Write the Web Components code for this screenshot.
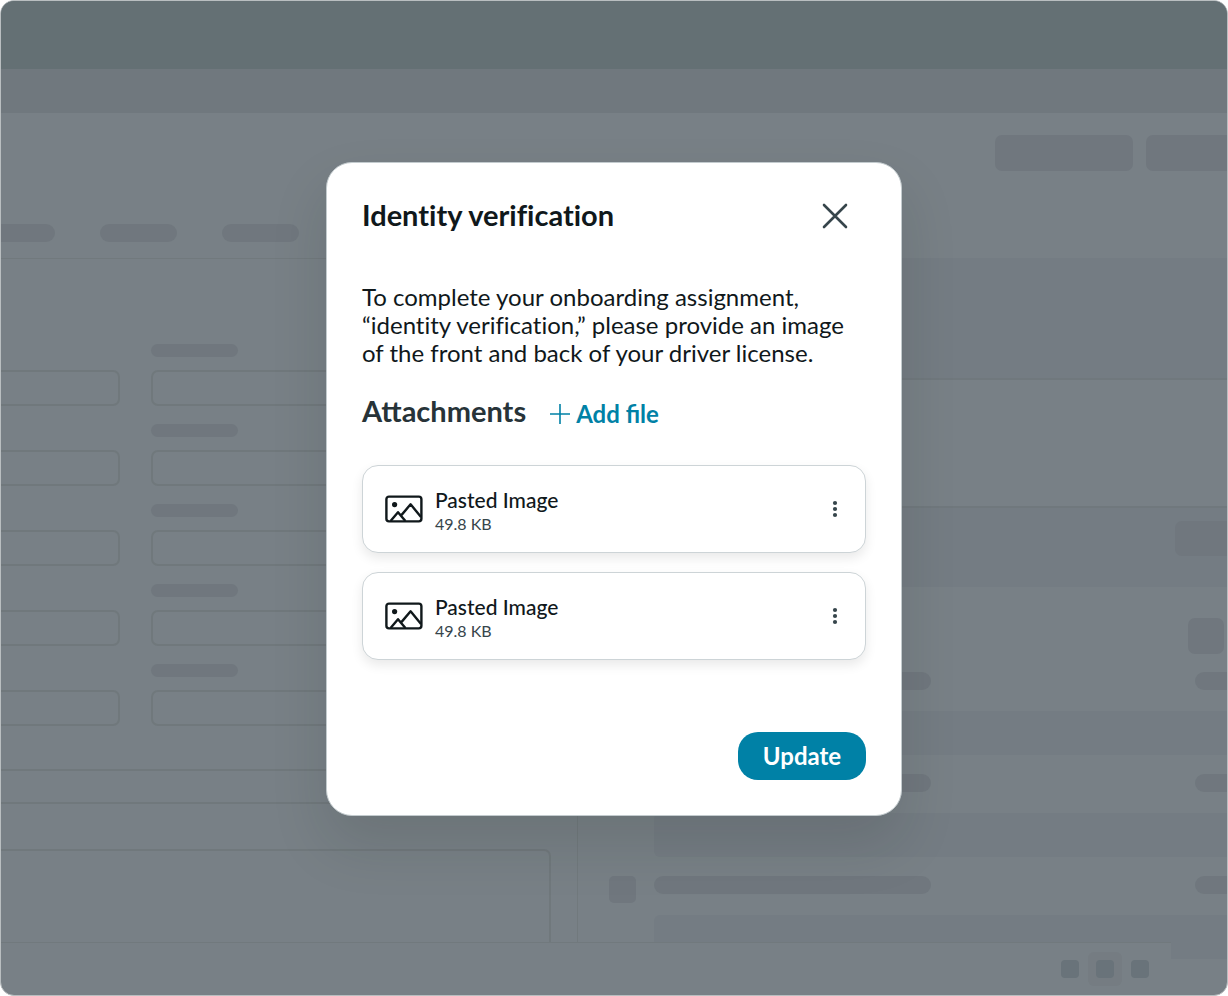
<!DOCTYPE html>
<html lang="en">
<head>
<meta charset="utf-8">
<meta name="viewport" content="width=device-width, initial-scale=1">
<title>Identity verification</title>
<style>
  body { margin: 0; background: #fff; font-family: Lato, "Open Sans", sans-serif; color: #10181b; }
</style>
</head>
<body>
<app-shell>
  <app-backdrop slot="backdrop"></app-backdrop>
  <modal-dialog heading="Identity verification">
    <p slot="intro">To complete your onboarding assignment, “identity verification,” please provide an image of the front and back of your driver license.</p>
    <attachment-card name="Pasted Image" size="49.8 KB"></attachment-card>
    <attachment-card name="Pasted Image" size="49.8 KB"></attachment-card>
  </modal-dialog>
</app-shell>

<script>
const define = (tag, html, setup) => customElements.define(tag, class extends HTMLElement {
  connectedCallback() {
    if (this.shadowRoot) return;
    this.attachShadow({ mode: "open" }).innerHTML = html;
    if (setup) setup(this, this.shadowRoot);
  }
});

define("app-shell", `
  <style>
    :host { display: grid; box-sizing: border-box; height: 100vh; min-height: 860px; border: 1px solid #b9bec0;
      border-radius: 14px; overflow: hidden; background: #788086; }
    .layer { grid-area: 1 / 1; min-width: 0; min-height: 0; }
    .back { display: grid; }
    .front { display: flex; justify-content: center; align-items: flex-start; padding: 161px 16px 0; }
  </style>
  <div class="layer back" aria-hidden="true"><slot name="backdrop"></slot></div>
  <div class="layer front"><slot></slot></div>`);

/* A placeholder bar: its size comes from --w and --h, its corners from --r. */
define("skeleton-block", `
  <style>
    :host { display: block; flex: none; box-sizing: border-box; width: var(--w, auto); height: var(--h, 18px);
      border-radius: var(--r, 9px); background: var(--c, #70777e); }
  </style>`);

define("app-backdrop", `
  <style>
    :host { display: grid; grid-template-rows: 68px 44px 146px minmax(0, 1fr) 53px; min-height: 0; overflow: hidden; }
    .top { background: #647074; }
    .nav { background: #70787e; }
    .head { display: flex; flex-direction: column; justify-content: space-between; box-sizing: border-box;
      padding: 22px 0 16px; border-bottom: 1px solid #71797d; }
    .actions { display: flex; gap: 13px; justify-content: flex-end; }
    .tabs { display: flex; gap: 45px; }
    .main { display: grid; grid-template-columns: 471fr 529fr; min-height: 0; }
    .left { border-right: 1px solid #71797d; overflow: hidden; }
    .fields { display: grid; grid-template-columns: 119px 1fr; column-gap: 31px; row-gap: 24px; padding-top: 85px; }
    .field { display: grid; grid-template-rows: 13px 36px; row-gap: 13px; height: 56px; }
    .box { grid-row: 2; box-sizing: border-box; border: 2px solid #70787c; border-radius: 7px; height: 36px; }
    .cut { border-left: 0; border-radius: 0 7px 7px 0; }
    .row { box-sizing: border-box; margin-top: 49px; height: 35px; border: 2px solid #70787c; border-width: 2px 0; }
    .note { box-sizing: border-box; margin: 45px 26px 0 0; height: 160px; border: 2px solid #70787c; border-left: 0; border-radius: 0 7px 0 0; }
    .right { overflow: hidden; }
    .band { box-sizing: border-box; background: #747c83; }
    .b1 { height: 122px; border-bottom: 2px solid #70787d; }
    .b2 { height: 126px; border-bottom: 2px solid #70787d; }
    .b3 { height: 79px; padding-top: 13px; display: flex; justify-content: flex-end; }
    .tool { display: flex; justify-content: flex-end; padding: 31px 3px 0 0; }
    .items { padding-top: 18px; }
    .right { margin-top: -1px; }
    .item { display: grid; grid-template-columns: 27px 277px 1fr 32px; column-gap: 18px; padding-left: 31px; height: 102px; align-content: start; row-gap: 21px; }
    .gap { grid-column: 3; }
    .item .band { grid-column: 2 / 5; height: 44px; border-radius: 6px 0 0 6px; }
    .foot { display: flex; justify-content: flex-end; }
    .bar { flex: 1; border-top: 1px solid #71797d; display: flex; align-items: center; justify-content: flex-end; gap: 9px; padding-right: 22px; }
    .pick { display: grid; place-items: center; width: 34px; height: 34px; border-radius: 6px; background: #757c82; }
    .end { width: 56px; }
    .end .band { height: 17px; }
  </style>
  <div class="top"></div>
  <div class="nav"></div>
  <div class="head">
    <div class="actions">
      <skeleton-block style="--w:138px;--h:36px;--r:7px"></skeleton-block>
      <skeleton-block style="--w:81px;--h:36px;--r:7px 0 0 7px"></skeleton-block>
    </div>
    <div class="tabs">
      <skeleton-block style="--w:54px;--r:0 9px 9px 0"></skeleton-block>
      <skeleton-block style="--w:77px"></skeleton-block>
      <skeleton-block style="--w:77px"></skeleton-block>
    </div>
  </div>
  <div class="main">
    <div class="left">
      <div class="fields"></div>
      <div class="row"></div>
      <div class="note"></div>
    </div>
    <div class="right">
      <div class="band b1"></div>
      <div class="b2"></div>
      <div class="band b3"><skeleton-block style="--w:52px;--h:35px;--r:7px 0 0 7px"></skeleton-block></div>
      <div class="tool"><skeleton-block style="--w:36px;--h:36px;--r:7px"></skeleton-block></div>
      <div class="items"></div>
    </div>
  </div>
  <div class="foot">
    <div class="bar">
      <skeleton-block style="--w:18px;--r:4px;--c:#69737a"></skeleton-block>
      <div class="pick"><skeleton-block style="--w:18px;--r:4px;--c:#69737a"></skeleton-block></div>
      <skeleton-block style="--w:18px;--r:4px;--c:#69737a"></skeleton-block>
    </div>
    <div class="end"><div class="band"></div></div>
  </div>`, (host, root) => {
  root.querySelector(".fields").innerHTML = `
    <div class="field"><div class="box cut"></div></div>
    <div class="field"><skeleton-block style="--w:87px;--h:13px;--r:7px"></skeleton-block><div class="box"></div></div>`.repeat(5);
  root.querySelector(".items").innerHTML = `
    <div class="item"><skeleton-block style="--w:27px;--h:27px;--r:5px;margin-bottom:-9px"></skeleton-block>
      <skeleton-block></skeleton-block><span class="gap"></span>
      <skeleton-block style="--r:9px 0 0 9px"></skeleton-block><div class="band"></div></div>`.repeat(3);
});

define("modal-dialog", `
  <style>
    :host { display: block; box-sizing: border-box; width: 100%; max-width: 576px; padding: 35px; border: 1px solid #c3cbce;
      border-radius: 26px; background: #fff; box-shadow: 0 28px 56px rgba(20, 28, 24, .13); }
    header { display: flex; align-items: center; justify-content: space-between; height: 36px; }
    h2, h3 { margin: 0; font-size: 29px; line-height: 34px; font-weight: 700; }
    h2 { font-variant-ligatures: no-common-ligatures; padding-bottom: 2px; }
    h3 { color: #273338; padding-bottom: 2px; }
    button { font: inherit; border: 0; padding: 0; background: none; cursor: pointer; }
    .close { display: grid; place-items: center; width: 32px; height: 32px; margin-right: 15px; }
    .intro { margin-top: 49px; font-size: 24px; line-height: 28px; font-variant-ligatures: no-common-ligatures; }
    ::slotted(p) { margin: 0; }
    .bar { display: flex; align-items: center; gap: 24px; margin-top: 27px; }
    .add { display: flex; align-items: center; gap: 6px; color: #0081a6; font-size: 24px; line-height: 28px; font-weight: 700; padding-top: 4px; }
    .list { display: grid; gap: 19px; margin-top: 35px; }
    footer { display: flex; justify-content: flex-end; margin-top: 72px; }
    .update { width: 128px; height: 48px; border-radius: 20px; background: #0081a6; color: #fff; font-size: 24px; line-height: 28px; font-weight: 700; }
  </style>
  <section role="dialog" aria-modal="true" aria-labelledby="title">
    <header>
      <h2 id="title"></h2>
      <button class="close" type="button" aria-label="Close">
        <svg width="26" height="26" viewBox="0 0 26 26" fill="none" stroke="#36454b" stroke-width="2.6" stroke-linecap="round"><path d="M2 2l22 22M24 2L2 24"/></svg>
      </button>
    </header>
    <div class="intro"><slot name="intro"></slot></div>
    <div class="bar">
      <h3>Attachments</h3>
      <button class="add" type="button">
        <svg width="20" height="20" viewBox="0 0 20 20" fill="none" stroke="#0081a6" stroke-width="1.6"><path d="M10 0v20M0 10h20"/></svg>
        <span>Add file</span>
      </button>
    </div>
    <div class="list"><slot></slot></div>
    <footer><button class="update" type="button">Update</button></footer>
  </section>`, (host, root) => {
  root.getElementById("title").textContent = host.getAttribute("heading");
});

define("attachment-card", `
  <style>
    :host { display: flex; align-items: center; box-sizing: border-box; height: 88px; padding: 0 20px 0 22px;
      border: 1px solid #cdd4d7; border-radius: 16px; background: #fff; box-shadow: 0 5px 12px rgba(0, 0, 0, .09); }
    .text { flex: 1; margin-left: 12px; padding-top: 3px; }
    .name { font-size: 21px; line-height: 26px; font-weight: 500; }
    .size { font-size: 16px; line-height: 22px; color: #36454b; }
    button { display: grid; place-items: center; width: 20px; height: 32px; padding: 0; border: 0; background: none; cursor: pointer; }
  </style>
  <svg width="38" height="28" viewBox="0 0 38 28" fill="none" stroke="#10181b" stroke-width="2.4" stroke-linejoin="round" aria-hidden="true">
    <rect x="1.4" y="1.6" width="35" height="24.8" rx="2.6"/>
    <circle cx="9.6" cy="9.6" r="2.6" fill="#10181b" stroke="none"/>
    <path d="M5.6 26l7.4-8.8 7.4 8.8M16 20.600l9.600-11.300L36 22"/>
  </svg>
  <div class="text"><div class="name"></div><div class="size"></div></div>
  <button type="button" aria-label="File options">
    <svg width="6" height="18" viewBox="0 0 6 18" fill="#36454b"><circle cx="3" cy="3" r="2.100"/><circle cx="3" cy="9" r="2.100"/><circle cx="3" cy="15" r="2.100"/></svg>
  </button>`, (host, root) => {
  root.querySelector(".name").textContent = host.getAttribute("name");
  root.querySelector(".size").textContent = host.getAttribute("size");
});
</script>
</body>
</html>
